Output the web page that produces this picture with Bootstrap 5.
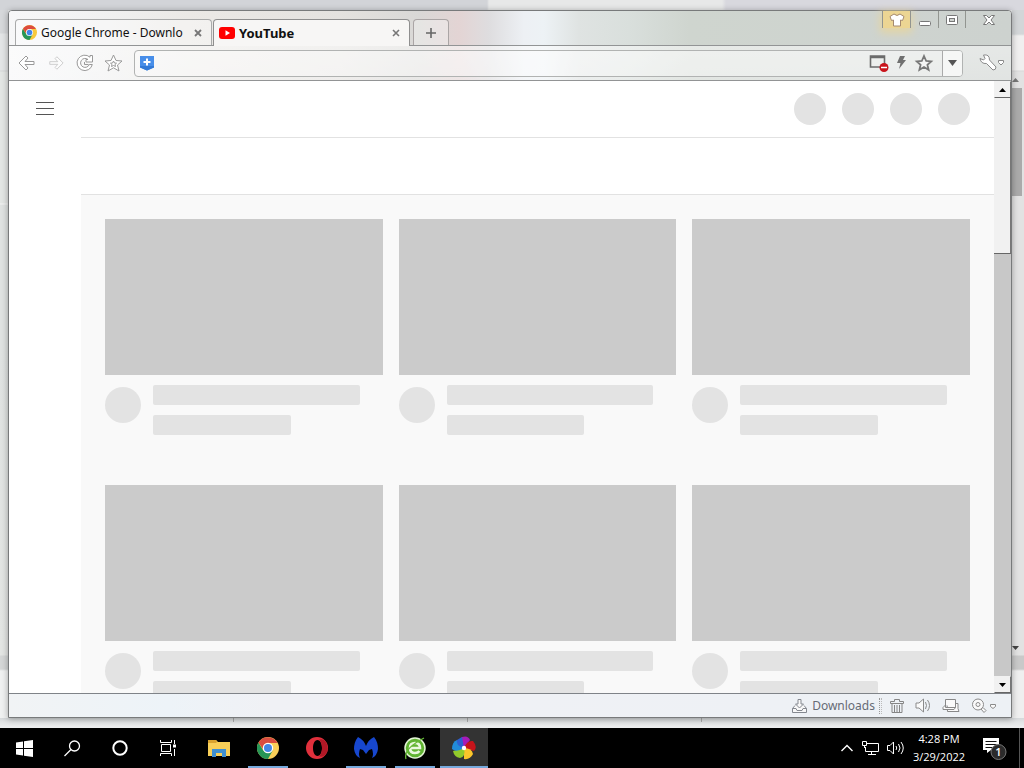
<!DOCTYPE html>
<html lang="en">
<head>
<meta charset="utf-8">
<meta name="viewport" content="width=device-width, initial-scale=1">
<title>YouTube</title>
<link href="https://cdn.jsdelivr.net/npm/bootstrap@5.3.0/dist/css/bootstrap.min.css" rel="stylesheet">
<script src="https://cdn.jsdelivr.net/npm/bootstrap@5.3.0/dist/js/bootstrap.bundle.min.js" defer></script>
<style>
body{font-family:"Noto Sans","Open Sans",sans-serif;font-size:13px;line-height:18px;color:#111;background:#e6e8e9}
button{border:0;background:none;padding:0;color:inherit;display:flex;align-items:center;justify-content:center;flex-shrink:0}
svg{display:block;flex-shrink:0}
.screen{height:100vh}
/* desktop behind the window */
.back-top{height:10px;background:linear-gradient(90deg,#d2d4d8 0 487px,#e7e8e8 489px 722px,#d8d8de 726px)}
.back-left{width:8px;background:linear-gradient(#d6d8da 0 23px,#e3e5e6 24px 60px,#d5d7d7 61px,#e3e6e4 62px 193px,#f4f4f4 194px,#dfe2e1 195px 330px,#e3e5e3 645px,#d4d6d6 646px 659px,#f0f1f1 661px)}
.back-right{width:12px;background:linear-gradient(#d3d6d8 0 24px,#f0efef 26px 60px,#d8d8d8 61px,#e2e2e2 62px 645px,#c9c9c9 646px 659px,#efefef 661px);padding:68px 0 68px}
.back-thumb{height:108px;width:10px;background:#aaa;margin-top:6px}
.back-bottom{height:10px;background:linear-gradient(#d5d8da,#e2e4e5 4px,#eeeff0)}
.back-bottom i{width:1px;height:4px;background:#aaa;margin-left:233px}
/* browser window */
.browser{border:1px solid #787a7b;border-radius:4px 4px 0 0;min-width:0;background:#fff;position:relative;box-shadow:0 1px 6px #0005}
.chrome-bg{border-radius:3px 3px 0 0;background:linear-gradient(90deg,#f7f7f8 0,#f3f4f5 60px,#ebe9e6 180px,#e4e2df 330px,#d9d8d6 410px,#e3d4d4 450px,#dedddf 480px,#edf0f4 515px,#edf2f5 535px,#dfe3e2 570px,#d9dfdc 620px,#cfd5cf 680px,#cdd2cf 100%)}
.tabstrip{height:35px;border-bottom:1px solid #929495;padding-left:6px}
.tab-item{width:197px;height:26px;border:1px solid #a9aaaa;border-bottom:0;border-radius:4px 4px 0 0;background:#ffffff66;padding:0 6px;margin-right:1px}
.tab-item.current{height:27px;margin-bottom:-1px;background:#f7f6f5;border-color:#8f8f8f;padding-left:5px;padding-right:6px}
.tab-item .tab-name{gap:4px;min-width:0;flex:1 1 0;justify-content:flex-start;white-space:nowrap}
.small-label{font-size:12px}
.tab-close{width:14px;height:14px;color:#777}
.tab-new{width:36px;height:26px;margin-left:2px;border:1px solid #aaa5a5;border-bottom:0;border-radius:4px 4px 0 0;background:#ffffff55;color:#666}
.caption-btns{height:18px}
.caption-btns button{height:17px;border-left:1px solid #929590}
.w28{width:28px}.w27{width:27px}.w46{width:46px}
.caption-btns .shirt{background:#ecd593;box-shadow:0 3px 8px 2px #e4d5a4}
.toolbar-row{height:35px;background:linear-gradient(#ffffff80,#ffffff66);border-bottom:1px solid #929495;padding-left:3px}
.nav-btn{width:29px;height:24px;color:#999}
.address{height:27px;border:1px solid #b1b3b2;border-radius:4px;background:#ffffff55;min-width:0;margin-left:6px}
.address input{border:0;background:none;outline:0;min-width:0;height:24px}
.addr-drop{width:20px;align-self:stretch;border-left:1px solid #aaa;background:#f6f7f6;border-radius:0 3px 3px 0}
.tools-btn{margin:0 6px 0 16px}
/* page being loaded */
.side{width:72px;flex-shrink:0;background:#fff}
.page-top{height:57px;border-bottom:1px solid #e2e2e2;padding-right:24px;gap:16px}
.chips-bar{height:57px;border-bottom:1px solid #e2e2e2}
.feed{background:#f9f9f9;padding:24px 24px 0}
.feed-grid{display:grid;grid-template-columns:repeat(3,minmax(0,1fr));gap:50px 16px}
.thumb{aspect-ratio:16/9;background:#cbcbcb}
.skel{background:#e3e3e3}
.round32{width:32px;height:32px}.round36{width:36px;height:36px;margin-top:12px;flex-shrink:0}
.bar-line{height:20px;border-radius:2px;margin-top:10px}
.w-90{width:90%}.w-60{width:60%}
.scroller{width:17px;background:#c8c8c8}
.scroller button{height:17px;background:#f1f1f1;border:1px solid #f1f1f1;border-right-color:#777;border-bottom:1px solid #666;width:17px}
.scroller .grip{height:156px;background:#f1f1f1;border-right:1px solid #777;border-bottom:1px solid #666}
.statusbar{height:24px;border-top:1px solid #7f8388;background:linear-gradient(90deg,#f1f3f5,#edf3f8 160px,#f0f1f5 260px,#edf1f5);color:#666b75;padding-right:13px}
.status-icons{gap:11px;margin-left:8px}
.dots{width:3px;height:16px;border-left:1px dotted #999;border-right:1px dotted #bbb}
/* taskbar */
.taskbar{height:40px;background:#000;color:#fff;font-size:12px;line-height:18px}
.taskbar button{height:40px}
.app{width:48px;position:relative}
.apps{gap:1px;margin-left:3px}
.running::after{content:"";position:absolute;left:4px;right:4px;bottom:0;height:2px;background:#76a9dc}
.active-app{background:#333}
.active-app::after{left:0;right:0}
.clock{width:70px;flex-direction:column;white-space:nowrap;font-family:"Open Sans","Noto Sans",sans-serif;font-size:11px}
.desk-edge{width:5px;border-left:1px solid #555}
</style>
</head>
<body>
<div class="screen d-flex flex-column overflow-hidden">
  <div class="back-top flex-shrink-0"></div>
  <div class="d-flex flex-grow-1" style="min-height:0">
    <div class="back-left flex-shrink-0"></div>
    <main class="browser d-flex flex-column flex-grow-1">
      <header class="chrome-bg">
        <div class="tabstrip d-flex align-items-end">
          <div class="tab-item d-flex align-items-center" >
            <button class="tab-name small-label" type="button">
              <svg width="15" height="15" viewBox="0 0 24 24"><circle cx="12" cy="12" r="12" fill="#f8c93c"/><path d="M1.600 6A12 12 0 0 0 12 24L17 15 12 12 7 15z" fill="#27965a"/><path d="M1.600 6A12 12 0 0 1 22.400 6.500H12A5.500 5.500 0 0 0 7 14z" fill="#dd4b3e"/><circle cx="12" cy="12" r="5.700" fill="#fff"/><circle cx="12" cy="12" r="4.500" fill="#4285ea"/></svg>
              <span>Google Chrome - Downlo</span>
            </button>
            <button class="tab-close" type="button" aria-label="Close tab"><svg width="8" height="8" viewBox="0 0 8 8"><path d="M1 1l6 6M7 1L1 7" stroke="currentColor" stroke-width="1.800"/></svg></button>
          </div>
          <div class="tab-item current d-flex align-items-center">
            <button class="tab-name fw-bold" type="button">
              <svg width="16" height="12" viewBox="0 0 16 12"><rect width="16" height="12" rx="3" fill="#f00"/><path d="M6.500 3.200v5.600L11 6z" fill="#fff"/></svg>
              <span>YouTube</span>
            </button>
            <button class="tab-close" type="button" aria-label="Close tab"><svg width="8" height="8" viewBox="0 0 8 8"><path d="M1 1l6 6M7 1L1 7" stroke="currentColor" stroke-width="1.600"/></svg></button>
          </div>
          <button class="tab-new" type="button" aria-label="New tab"><svg width="10" height="10" viewBox="0 0 10 10"><path d="M5 0v10M0 5h10" stroke="currentColor" stroke-width="1.600"/></svg></button>
          <div class="caption-btns d-flex ms-auto align-self-start">
            <button class="w28 shirt" type="button" aria-label="Skins"><svg width="16" height="14" viewBox="0 0 16 14"><path d="M5 1L1 3.500l1.500 4L4.500 7v6h7V7l2 .500 1.500-4L11 1Q8 4 5 1z" fill="#fff" stroke="#a58a70" stroke-linejoin="round"/></svg></button>
            <button class="w28" type="button" aria-label="Minimize"><svg width="12" height="12" viewBox="0 0 12 12"><rect x=".500" y="7.500" width="11" height="4" rx="1" fill="#fff" stroke="#777"/></svg></button>
            <button class="w27" type="button" aria-label="Maximize"><svg width="12" height="10" viewBox="0 0 12 10"><rect x=".500" y=".500" width="11" height="9" rx="1" fill="#fff" stroke="#777"/><rect x="3.500" y="3.500" width="5" height="3" fill="#d0d4d0" stroke="#777"/></svg></button>
            <button class="w46" type="button" aria-label="Close"><svg width="12" height="10" viewBox="0 0 12 10"><path d="M.500.500h3L6 3 8.500.500h3L8 5l3.500 4.500h-3L6 7 3.500 9.500h-3L4 5z" fill="#fff" stroke="#777"/></svg></button>
          </div>
        </div>
        <div class="toolbar-row d-flex align-items-center">
          <button class="nav-btn" type="button" aria-label="Back"><svg width="18" height="18" viewBox="0 0 18 18" fill="#fff" stroke="currentColor" stroke-linejoin="round"><path d="M1 9l7-7 2 2-3 3.500h9v3H7L10 14l-2 2z"/></svg></button>
          <button class="nav-btn opacity-50" type="button" aria-label="Forward"><svg width="16" height="16" viewBox="0 0 18 18" fill="#fff" stroke="currentColor" stroke-linejoin="round"><path d="M17 9l-7-7-2 2 3 3.500H2v3h9L8 14l2 2z"/></svg></button>
          <button class="nav-btn" type="button" aria-label="Reload"><svg width="18" height="18" viewBox="0 0 18 18" fill="#fff" stroke="currentColor" stroke-linejoin="round"><path d="M14 3.200V1.500h2.500V8H10V5.500h2A4.500 4.500 0 1 0 13.300 10.500h3A7.700 7.700 0 1 1 14 3.200z"/><path d="M8.500 8v2.500h4" fill="none"/></svg></button>
          <button class="nav-btn" type="button" aria-label="Favorites"><svg width="19" height="18" viewBox="0 0 19 18" fill="#fff" stroke="currentColor" stroke-linejoin="round"><path d="M9.500 1l2.500 5.500 6 .500-4.500 4 1.500 6-5.500-3.200L4 17l1.500-6L1 7l6-.500z"/><path d="M9.500 7l1 2 2 .200-1.500 1.300.500 2-2-1-2 1 .500-2L6.500 9.200l2-.200z"/></svg></button>
          <div class="address d-flex align-items-center flex-grow-1">
            <svg class="ms-1 me-2" width="16" height="16" viewBox="0 0 16 16"><path d="M1 1h14v11.500L8 15.500l-7-3z" fill="#488ee9"/><path d="M1 11h14v1.500l-7 3-7-3z" fill="#3379d5"/><path d="M8 3.500v7M4.500 7h7" stroke="#fff" stroke-width="2"/></svg>
            <input class="flex-grow-1" type="text" aria-label="Address">
            <button type="button" aria-label="Popup blocker"><svg width="20" height="18" viewBox="0 0 20 18"><path d="M1.500 2h14v11h-14zM1 3.500h15" fill="none" stroke="#6b6b6b" stroke-width="1.600"/><circle cx="15" cy="13.500" r="4.500" fill="#c9141b"/><path d="M12 13.500h6" stroke="#fff" stroke-width="1.500"/></svg></button>
            <button class="ms-2" type="button" aria-label="Turbo"><svg width="9" height="14" viewBox="0 0 9 14"><path d="M3 0h5L6 4h3L2 13l1.500-6H0z" fill="#707070"/></svg></button>
            <button class="ms-2 me-2" type="button" aria-label="Add bookmark"><svg width="20" height="18" viewBox="0 0 20 18" ><path d="M10 2l2.200 5 5 .400-3.800 3.400 1.200 5L10 13l-4.600 2.800 1.200-5-3.800-3.400 5-.400z" fill="#f4f4f4" stroke="#777" stroke-width="1.800"/></svg></button>
            <button class="addr-drop" type="button" aria-label="History"><svg width="9" height="6" viewBox="0 0 9 6"><path d="M0 0h9L4.500 6z" fill="#555"/></svg></button>
          </div>
          <button class="tools-btn" type="button" aria-label="Tools"><svg width="26" height="18" viewBox="0 0 26 18" fill="#fff" stroke="#8a8a8a" stroke-linejoin="round"><path d="M1 4.500L4.500 6 6 4.500 4.500 1Q10.500 0 10.500 6l6.500 7q0 3-3 3L7.500 9.500Q2 10 1 4.500z"/><path d="M19.500 6.500h5v2L22 11l-2.500-2.500z"/></svg></button>
        </div>
      </header>
      <div class="d-flex flex-grow-1" style="min-height:0">
        <section class="d-flex flex-grow-1 overflow-hidden">
          <nav class="side"><button class="mx-auto mt-3 pt-1" type="button" aria-label="Menu"><svg width="18" height="14" viewBox="0 0 18 14"><path d="M0 1.500h18M0 7.500h18M0 13.500h18" stroke="#555"/></svg></button></nav>
          <div class="flex-grow-1 d-flex flex-column">
            <div class="page-top d-flex align-items-center justify-content-end flex-shrink-0">
              <span class="skel round32 rounded-circle"></span><span class="skel round32 rounded-circle"></span><span class="skel round32 rounded-circle"></span><span class="skel round32 rounded-circle"></span>
            </div>
            <div class="chips-bar flex-shrink-0"></div>
            <div class="feed flex-grow-1 overflow-hidden">
              <div class="feed-grid">
                <article><div class="thumb"></div><div class="d-flex"><span class="skel round36 rounded-circle"></span><div class="flex-grow-1 ms-2 ps-1"><div class="skel bar-line w-90"></div><div class="skel bar-line w-60"></div></div></div></article>
                <article><div class="thumb"></div><div class="d-flex"><span class="skel round36 rounded-circle"></span><div class="flex-grow-1 ms-2 ps-1"><div class="skel bar-line w-90"></div><div class="skel bar-line w-60"></div></div></div></article>
                <article><div class="thumb"></div><div class="d-flex"><span class="skel round36 rounded-circle"></span><div class="flex-grow-1 ms-2 ps-1"><div class="skel bar-line w-90"></div><div class="skel bar-line w-60"></div></div></div></article>
                <article><div class="thumb"></div><div class="d-flex"><span class="skel round36 rounded-circle"></span><div class="flex-grow-1 ms-2 ps-1"><div class="skel bar-line w-90"></div><div class="skel bar-line w-60"></div></div></div></article>
                <article><div class="thumb"></div><div class="d-flex"><span class="skel round36 rounded-circle"></span><div class="flex-grow-1 ms-2 ps-1"><div class="skel bar-line w-90"></div><div class="skel bar-line w-60"></div></div></div></article>
                <article><div class="thumb"></div><div class="d-flex"><span class="skel round36 rounded-circle"></span><div class="flex-grow-1 ms-2 ps-1"><div class="skel bar-line w-90"></div><div class="skel bar-line w-60"></div></div></div></article>
              </div>
            </div>
          </div>
        </section>
        <div class="scroller d-flex flex-column flex-shrink-0">
          <button type="button" aria-label="Scroll up"><svg width="7" height="4" viewBox="0 0 7 4"><path d="M0 4h7L3.500 0z"/></svg></button>
          <div class="grip"></div>
          <button class="mt-auto" type="button" aria-label="Scroll down"><svg width="7" height="4" viewBox="0 0 7 4"><path d="M0 0h7L3.500 4z"/></svg></button>
        </div>
      </div>
      <footer class="statusbar d-flex align-items-center justify-content-end flex-shrink-0">
        <button class="gap-1 me-1 small-label" type="button"><svg width="17" height="16" viewBox="0 0 17 16" fill="#f8f8f8" stroke="#858990"><path d="M4 7.500L1.500 10.500v4h14v-4L13 7.500M1.500 10.500H5l1 2h5l1-2h3.500"/><path d="M7 1.500h3V6h2.500l-4 4-4-4H7z"/></svg><span>Downloads</span></button>
        <span class="dots"></span>
        <div class="status-icons d-flex align-items-center">
          <button type="button" aria-label="Clean"><svg width="14" height="16" viewBox="0 0 14 16" fill="none" stroke="#858585"><path d="M.500 5.500v-2h4v-2h5v2h4v2zM2 6v8.500h10V6M4.500 7v7M7 7v7M9.500 7v7"/></svg></button>
          <button type="button" aria-label="Mute"><svg width="16" height="15" viewBox="0 0 16 15" fill="#fafafa" stroke="#8b8b8b"><path d="M1 5h3l4.500-4v13L4 10H1z"/><path d="M10.500 4q2 3.500 0 7M12.500 2q4 5.500 0 11" fill="none"/></svg></button>
          <button type="button" aria-label="Windows"><svg width="18" height="15" viewBox="0 0 18 15" fill="#fafafa" stroke="#888"><path d="M5 5.500h11v5l1 3H5.500z"/><path d="M3.500 1.500h10v8h-10zM3.500 7L1 9.500v2h11l1.500-2"/></svg></button>
          <button type="button" aria-label="Zoom"><svg width="27" height="16" viewBox="0 0 27 16" fill="#fafafa" stroke="#8b8b8b"><circle cx="7" cy="6.500" r="5.500"/><circle cx="7" cy="6.500" r="2"/><path d="M10 11l2-1.500 3 3-2 2z"/><path d="M19.500 6.500h5v2L22 10.500l-2.500-2z"/></svg></button>
        </div>
      </footer>
    </main>
    <div class="back-right flex-shrink-0 d-flex flex-column">
      <svg width="7" height="4" viewBox="0 0 7 4"><path d="M0 4h7L3.500 0z" fill="#777"/></svg>
      <div class="back-thumb"></div>
      <svg class="mt-auto" width="7" height="4" viewBox="0 0 7 4"><path d="M0 0h7L3.500 4z" fill="#444"/></svg>
    </div>
  </div>
  <div class="back-bottom d-flex flex-shrink-0"><i></i><i></i><i></i></div>
  <footer class="taskbar d-flex flex-shrink-0">
    <button class="app" type="button" aria-label="Start"><svg width="17" height="17" viewBox="0 0 17 17" fill="#fff"><path d="M0 2.500l7-1V8H0zM8 1.300L17 0v8H8zM0 9h7v6.500l-7-1zM8 9h9v8l-9-1.300z"/></svg></button>
    <button class="app" type="button" aria-label="Search"><svg width="17" height="17" viewBox="0 0 17 17" fill="none" stroke="#fff" stroke-width="1.300"><circle cx="10.500" cy="6" r="5"/><path d="M7 9.500L.500 16"/></svg></button>
    <button class="app" type="button" aria-label="Cortana"><svg width="16" height="16" viewBox="0 0 16 16"><circle cx="8" cy="8" r="6.700" fill="none" stroke="#fff" stroke-width="2"/></svg></button>
    <button class="app" type="button" aria-label="Task view"><svg width="17" height="16" viewBox="0 0 17 16" fill="none" stroke="#fff"><path d="M.500 0v2.500h11V0M.500 16v-2.500h11V16M1.500 4.500h9v7h-9zM14.500 0v4M14.500 9v7"/><path d="M13 4.500h3v3h-3z" fill="#fff" stroke="none"/></svg></button>
    <div class="apps d-flex">
      <button class="app" type="button" aria-label="File Explorer"><svg width="22" height="18" viewBox="0 0 22 18"><path d="M0 1h8l2 2h12v14H0z" fill="#f8cf58"/><path d="M0 1h8l1 2-1 1H0z" fill="#d9a32f"/><path d="M4 18V10h14v8h-4v-4H8v4z" fill="#3f8fd0"/></svg></button>
      <button class="app running" type="button" aria-label="Google Chrome"><svg width="22" height="22" viewBox="0 0 24 24"><circle cx="12" cy="12" r="12" fill="#f9cf58"/><path d="M1.600 6A12 12 0 0 0 12 24L17 15 12 12 7 15z" fill="#279657"/><path d="M1.600 6A12 12 0 0 1 22.400 6.500H12A5.500 5.500 0 0 0 7 14z" fill="#d94d41"/><circle cx="12" cy="12" r="5.700" fill="#fff"/><circle cx="12" cy="12" r="4.400" fill="#4387e6"/></svg></button>
      <button class="app" type="button" aria-label="Opera"><svg width="22" height="22" viewBox="0 0 22 22"><path fill-rule="evenodd" d="M11 0a11 11 0 1 0 0 22 11 11 0 1 0 0-22zM11.500 3c3 0 4.500 4 4.500 8s-1.500 8-4.500 8S7 15 7 11s1.500-8 4.500-8z" fill="#e0303c"/><path d="M12.500 3Q17 1 20 5q4 8-1 13-3 3-6.500 1c4.700-1 4.700-15 0-16z" fill="#b01826"/></svg></button>
      <button class="app running" type="button" aria-label="Malwarebytes"><svg width="24" height="22" viewBox="0 0 24 22"><path d="M4 0q6 3 8 9 2-6 8-9 4 5 4 12-1 7-6 9 2-4 0-9l-3 1-3 4-3-4-3-1q-2 5 0 9-5-2-6-9Q0 5 4 0z" fill="#1747ce"/></svg></button>
      <button class="app running" type="button" aria-label="Green browser"><svg width="24" height="24" viewBox="0 0 24 24"><circle cx="12" cy="12" r="10" fill="#60b332" stroke="#e3f5d5" stroke-width="1.500"/><path d="M7 12h10q0-5-5-5t-5 5 5 5q3 0 4.500-2" fill="none" stroke="#e9f8dd" stroke-width="2.600"/><path d="M3 23Q0 13 21 2" fill="none" stroke="#67ba36" stroke-width="1.300"/></svg></button>
      <button class="app running active-app" type="button" aria-label="Browser"><svg width="24" height="24" viewBox="0 0 24 24"><path d="M12 12Q6 6 10 1q6-2 8 3z" fill="#a61cb7"/><path d="M12 12Q15 4 21 5q5 6 1 10z" fill="#c5141b"/><path d="M12 12q8 0 9 6-3 6-9 5z" fill="#fbc52a"/><path d="M12 12q2 9-4 10-6-1-7-7z" fill="#92ca2b"/><path d="M12 12Q4 17 0 13q0-7 5-9z" fill="#218bd9"/><path d="M12 12Q3 9 5 4l5-3z" fill="#2d60d0"/><circle cx="12" cy="12" r="2.200" fill="#fff"/></svg></button>
    </div>
    <div class="d-flex ms-auto">
      <button class="me-2" type="button" aria-label="Show hidden icons"><svg width="14" height="8" viewBox="0 0 14 8"><path d="M1.500 7L7 1.500 12.500 7" fill="none" stroke="#fff" stroke-width="1.400"/></svg></button>
      <button class="me-2" type="button" aria-label="Network"><svg width="17" height="14" viewBox="0 0 17 14" fill="none" stroke="#fff"><path d="M5 2.500h11.500v8H3.500V6M.500.500h4v4h-4zM2.500 4.500V7M9.500 10v3M6 13.500h8"/></svg></button>
      <button type="button" aria-label="Volume"><svg width="17" height="14" viewBox="0 0 17 14" fill="none" stroke="#fff"><path d="M.500 4.500h2.500L6.500 1v12L3 9.500H.500zM9 5q1.500 2 0 4M11.500 3q3 4 0 8M14 1q4.500 6 0 12"/></svg></button>
      <button class="clock" type="button"><span>4:28 PM</span><span>3/29/2022</span></button>
      <button class="ms-2 me-2 pe-1" type="button" aria-label="Notifications"><svg width="25" height="26" viewBox="0 0 25 26"><path d="M1 3h16v12H9l-4 3v-3H1z" fill="#fff"/><path d="M3.500 6.500h11M3.500 9.500h11M3.500 12.500h7" stroke="#111"/><circle cx="16.500" cy="17" r="7.500" fill="#2b2b2b" stroke="#777"/><text x="16.500" y="21" fill="#fff" text-anchor="middle" font-size="11" font-weight="600" font-family="Open Sans,sans-serif">1</text></svg></button>
      <span class="desk-edge"></span>
    </div>
  </footer>
</div>
</body>
</html>
